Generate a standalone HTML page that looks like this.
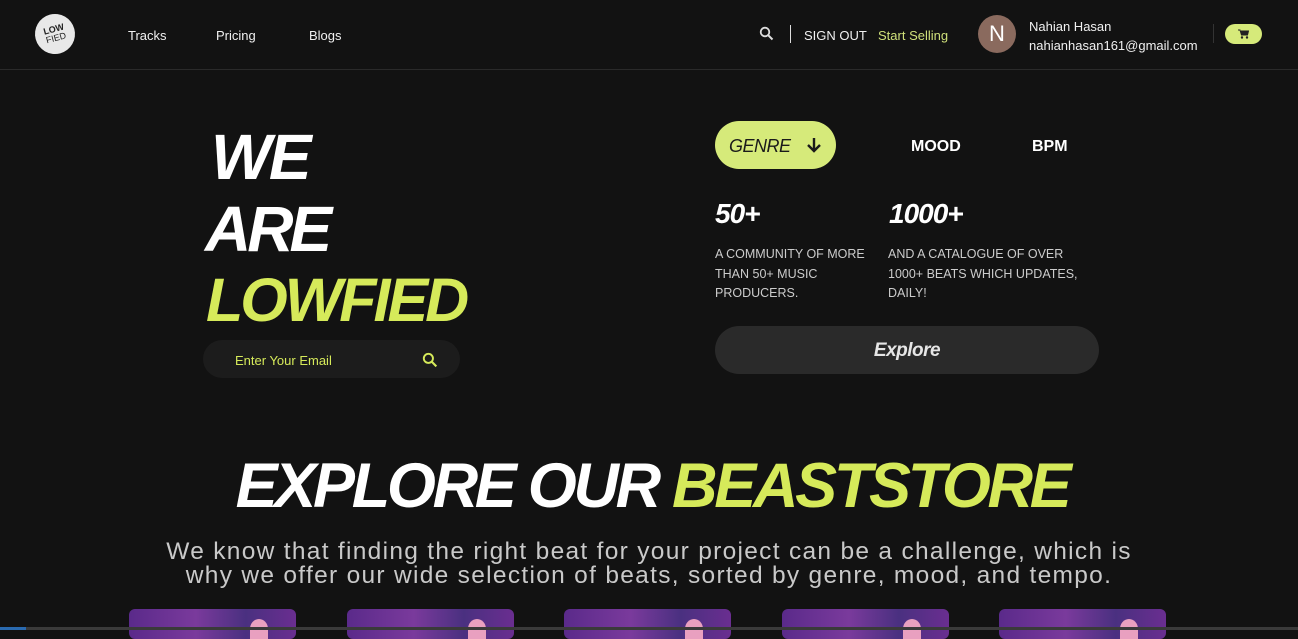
<!DOCTYPE html>
<html><head><meta charset="utf-8"><style>
*{margin:0;padding:0;box-sizing:border-box}
body{width:1298px;height:630px;overflow:hidden;background:#121212;font-family:"Liberation Sans",sans-serif;color:#fff;position:relative}
.a{position:absolute}
.nav{font-size:13px;color:#f0f0f0}
.h{font-weight:bold;font-style:italic;font-size:64px;letter-spacing:-2.5px;line-height:1}
.acc{color:#d6ea5a}
.card{position:absolute;top:609px;width:167px;height:30px;border-radius:6px;background:linear-gradient(90deg,#5a2a8a,#7a3a9c 40%,#4a3080 70%,#6a2e90)}
.card:after{content:"";position:absolute;right:28px;top:10px;width:18px;height:20px;border-radius:50% 50% 0 0;background:#e9a0c0}
</style></head><body>
<div class="a" style="left:0;right:0;top:69px;height:1px;background:#2a2a2a"></div>
<div class="a" style="left:35px;top:14px;width:40px;height:40px;border-radius:50%;background:#e8e8e8;color:#222;font-size:9px;font-weight:bold;line-height:9px;text-align:center;padding-top:11px;transform:rotate(-15deg)">LOW<br><span style="font-weight:normal">FIED</span></div>
<div class="a nav" style="left:128px;top:28px">Tracks</div>
<div class="a nav" style="left:216px;top:28px">Pricing</div>
<div class="a nav" style="left:309px;top:28px">Blogs</div>
<svg class="a" style="left:759px;top:26px" width="16" height="16" viewBox="0 0 16 16"><circle cx="6" cy="6" r="4.3" fill="none" stroke="#ddd" stroke-width="1.8"/><path d="M9.2 9.2L13.5 13.5" stroke="#ddd" stroke-width="2"/></svg>
<div class="a" style="left:790px;top:25px;width:1px;height:18px;background:#ddd"></div>
<div class="a nav" style="left:804px;top:28px">SIGN OUT</div>
<div class="a nav acc" style="left:878px;top:28px;color:#cfe07a">Start Selling</div>
<div class="a" style="left:978px;top:15px;width:38px;height:38px;border-radius:50%;background:#8a6a5e;color:#fff;font-size:22px;text-align:center;line-height:38px">N</div>
<div class="a nav" style="left:1029px;top:19px">Nahian Hasan</div>
<div class="a nav" style="left:1029px;top:38px">nahianhasan161@gmail.com</div>
<div class="a" style="left:1213px;top:24px;width:1px;height:19px;background:#333"></div>
<div class="a" style="left:1225px;top:24px;width:37px;height:20px;border-radius:10px;background:#d6ea7a"></div>
<svg class="a" style="left:1238px;top:29px" width="11" height="10" viewBox="0 0 11 10"><path d="M0 1h2l1.5 5h6l1-4H3" fill="#222" stroke="#222"/><circle cx="4" cy="8.5" r="1.2" fill="#222"/><circle cx="9" cy="8.5" r="1.2" fill="#222"/></svg>

<div class="a h" style="left:211px;top:125px">WE</div>
<div class="a h" style="left:205px;top:197px;letter-spacing:-4px">ARE</div>
<div class="a h acc" style="left:206px;top:270px;font-size:61px;letter-spacing:-3px">LOWFIED</div>
<div class="a" style="left:203px;top:340px;width:257px;height:38px;border-radius:19px;background:#1c1c1c"></div>
<div class="a" style="left:235px;top:353px;font-size:13px;color:#d6ea5a">Enter Your Email</div>
<svg class="a" style="left:422px;top:352px" width="17" height="17" viewBox="0 0 16 16"><circle cx="6" cy="6" r="4.3" fill="none" stroke="#d6ea5a" stroke-width="1.8"/><path d="M9.2 9.2L13.5 13.5" stroke="#d6ea5a" stroke-width="2"/></svg>

<div class="a" style="left:715px;top:121px;width:121px;height:48px;border-radius:24px;background:#d6ea7a"></div>
<div class="a" style="left:729px;top:136px;font-size:18px;font-style:italic;color:#1a1a1a;letter-spacing:-0.5px">GENRE</div>
<svg class="a" style="left:805px;top:136px" width="18" height="18" viewBox="0 0 18 18"><path d="M9 2v13M3 9l6 6 6-6" fill="none" stroke="#1a1a1a" stroke-width="2.4"/></svg>
<div class="a" style="left:911px;top:138px;font-size:16px;font-weight:bold">MOOD</div>
<div class="a" style="left:1032px;top:138px;font-size:16px;font-weight:bold">BPM</div>
<div class="a" style="left:715px;top:198px;font-size:28px;font-weight:bold;font-style:italic;letter-spacing:-1px">50+</div>
<div class="a" style="left:889px;top:198px;font-size:28px;font-weight:bold;font-style:italic;letter-spacing:-1px">1000+</div>
<div class="a" style="left:715px;top:245px;font-size:12.5px;line-height:19.5px;color:#ccc">A COMMUNITY OF MORE<br>THAN 50+ MUSIC<br>PRODUCERS.</div>
<div class="a" style="left:888px;top:245px;font-size:12.5px;line-height:19.5px;color:#ccc">AND A CATALOGUE OF OVER<br>1000+ BEATS WHICH UPDATES,<br>DAILY!</div>
<div class="a" style="left:715px;top:326px;width:384px;height:48px;border-radius:24px;background:#2a2a2a;text-align:center;line-height:50px;font-size:19px;font-weight:bold;font-style:italic;color:#e6e6e6;letter-spacing:-0.5px">Explore</div>

<div class="a" style="left:0;width:1298px;top:452px;text-align:center;padding-left:6px;font-size:63px;font-weight:bold;font-style:italic;letter-spacing:-3.3px;line-height:68px">EXPLORE OUR <span class="acc">BEASTSTORE</span></div>
<div class="a" style="left:0;width:1298px;top:540px;text-align:center;font-size:24.5px;letter-spacing:1.3px;line-height:24px;color:#c9c9c9">We know that finding the right beat for your project can be a challenge, which is<br>why we offer our wide selection of beats, sorted by genre, mood, and tempo.</div>

<div class="card" style="left:129px"></div>
<div class="card" style="left:347px"></div>
<div class="card" style="left:564px"></div>
<div class="card" style="left:782px"></div>
<div class="card" style="left:999px"></div>
<div class="a" style="left:0;right:0;top:627px;height:3px;background:#3a3a3a"></div>
<div class="a" style="left:0;width:26px;top:627px;height:3px;background:#2a6ab0"></div>
</body></html>
